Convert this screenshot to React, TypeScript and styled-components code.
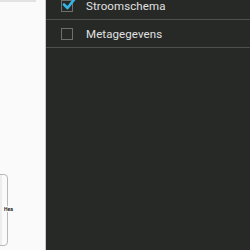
import styled, { createGlobalStyle } from "styled-components";

const GlobalStyle = createGlobalStyle`
  html, body {
    margin: 0;
    padding: 0;
    width: 250px;
    height: 250px;
    overflow: hidden;
    font-family: Roboto, "Liberation Sans", sans-serif;
  }
`;

interface Layer {
  label: string;
  checked: boolean;
}

const layers: Layer[] = [
  { label: "Stroomschema", checked: true },
  { label: "Metagegevens", checked: false },
];

function CheckMark() {
  return (
    <svg width="16" height="14" viewBox="0 0 16 14">
      <path
        d="M3 7.5 L6.5 11 L14 1.5"
        fill="none"
        stroke="#33b5e5"
        strokeWidth="2.6"
        strokeLinecap="round"
        strokeLinejoin="round"
      />
    </svg>
  );
}

function App() {
  return (
    <>
      <GlobalStyle />
      <Screen>
        <Canvas>
          <TopStrip />
          <Group>
            <GroupLabel>Hea</GroupLabel>
          </Group>
        </Canvas>
        <Drawer>
          <List>
            {layers.map((layer) => (
              <Row key={layer.label}>
                <Box>
                  {layer.checked && (
                    <Tick>
                      <CheckMark />
                    </Tick>
                  )}
                </Box>
                <Label>{layer.label}</Label>
              </Row>
            ))}
          </List>
        </Drawer>
      </Screen>
    </>
  );
}

export default App;

const Screen = styled.div`
  display: flex;
  width: 250px;
  height: 250px;
`;

const Canvas = styled.div`
  width: 45px;
  flex-shrink: 0;
  background: #fafafa;
  border-right: 1px solid #c9c9c9;
  display: flex;
  flex-direction: column;
  overflow: hidden;
`;

const TopStrip = styled.div`
  width: 36px;
  height: 2px;
  background: #e2e2e2;
`;

const Group = styled.div`
  position: relative;
  margin-top: 172px;
  margin-left: -10px;
  width: 16px;
  height: 70px;
  border: 1px solid #b8b8b8;
  border-radius: 4px;
  background: linear-gradient(90deg, #ededed 0, #ededed 11px, #fafafa 11px);
`;

const GroupLabel = styled.span`
  position: absolute;
  left: 12px;
  top: 31px;
  padding: 0 1px;
  background: #fafafa;
  font-size: 5px;
  font-weight: 700;
  line-height: 6px;
  color: #222;
`;

const Drawer = styled.div`
  flex: 1;
  background: #272927;
  overflow: hidden;
`;

const List = styled.div`
  margin-top: -8px;
  display: flex;
  flex-direction: column;
`;

const Row = styled.div`
  display: flex;
  align-items: center;
  height: 27px;
  padding-left: 15px;
  gap: 13px;
  border-bottom: 1px solid #4e504e;
`;

const Box = styled.div`
  position: relative;
  width: 10px;
  height: 10px;
  border: 1px solid #6e706e;
  flex-shrink: 0;
`;

const Tick = styled.div`
  position: absolute;
  left: -1px;
  top: -4px;
  line-height: 0;
`;

const Label = styled.span`
  font-size: 11.5px;
  color: #e0e0e0;
  letter-spacing: 0.1px;
`;
